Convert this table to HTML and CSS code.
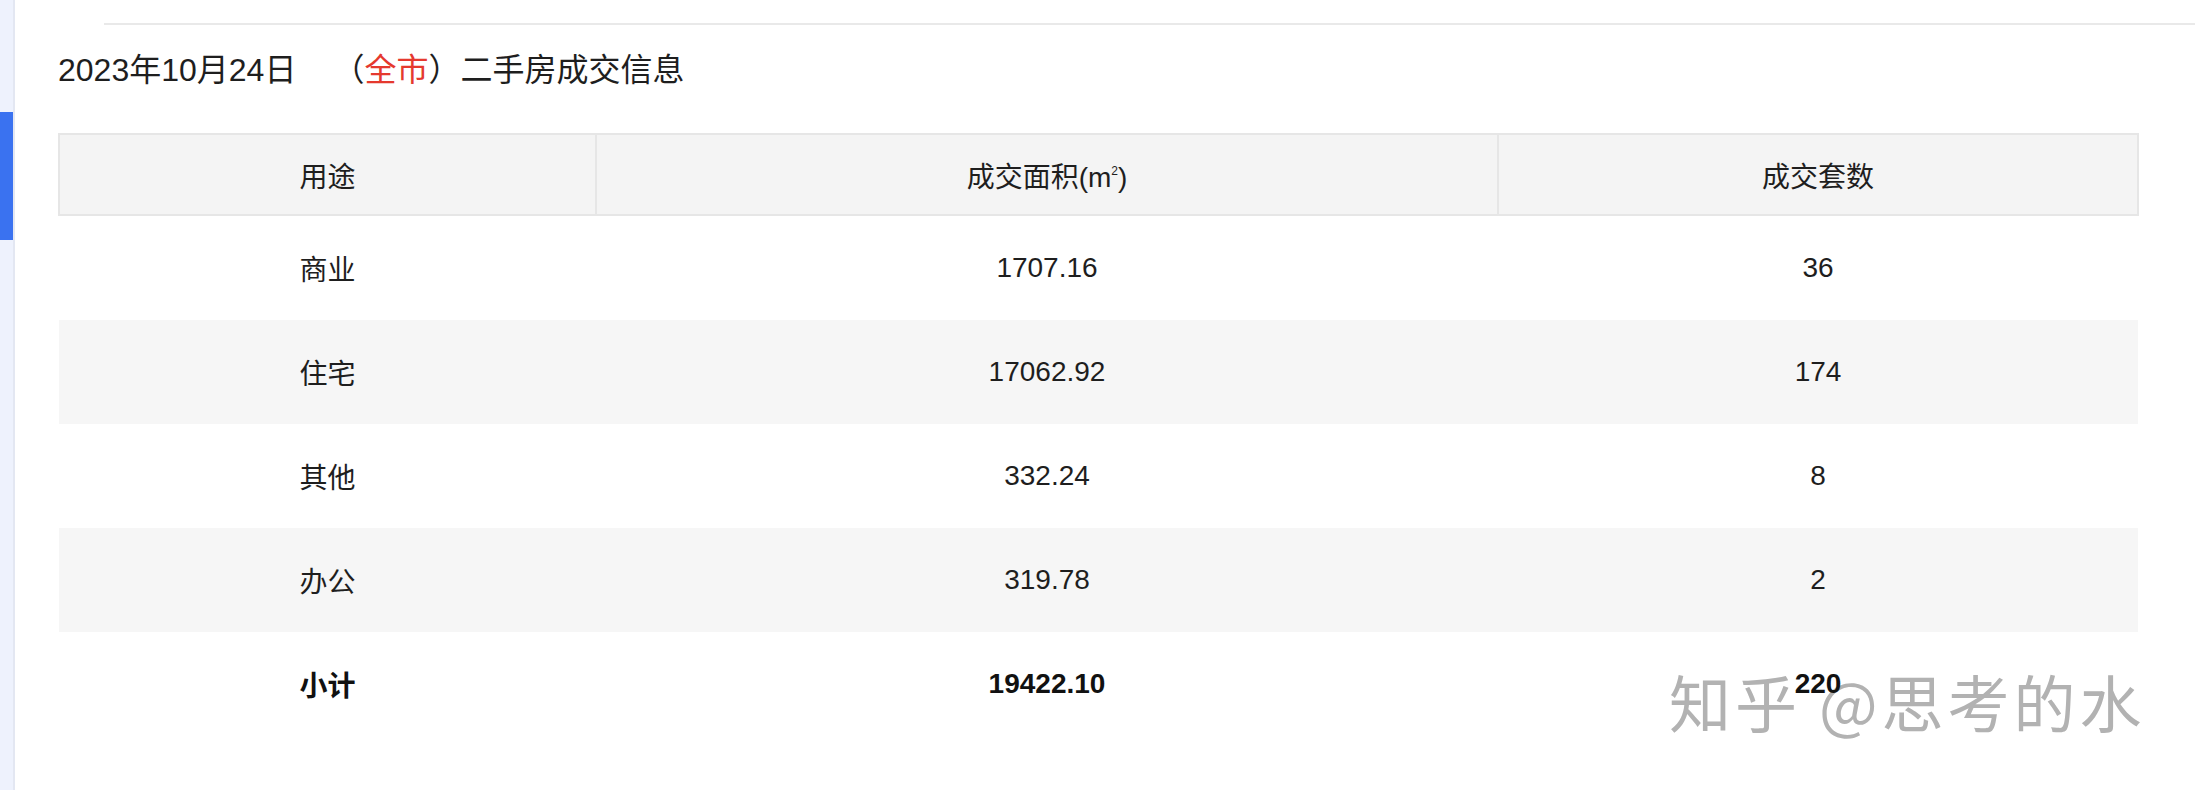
FILE: index.html
```html
<!DOCTYPE html>
<html lang="zh-CN">
<head>
<meta charset="utf-8">
<title>二手房成交信息</title>
<link rel="stylesheet" href="styles.css">
</head>
<body>
<div class="page">
  <aside class="rail"><div class="rail-mark"></div></aside>
  <main class="main">
    <div class="topbar"></div>
    <h2 class="title">2023年10月24日<span class="scope">（<em class="city">全市</em>）</span>二手房成交信息</h2>
    <table class="deal">
      <colgroup>
        <col class="c1"><col class="c2"><col class="c3">
      </colgroup>
      <thead>
        <tr><th>用途</th><th>成交面积(m<sup>2</sup>)</th><th>成交套数</th></tr>
      </thead>
      <tbody>
        <tr><td>商业</td><td>1707.16</td><td>36</td></tr>
        <tr class="alt"><td>住宅</td><td>17062.92</td><td>174</td></tr>
        <tr><td>其他</td><td>332.24</td><td>8</td></tr>
        <tr class="alt"><td>办公</td><td>319.78</td><td>2</td></tr>
        <tr class="total"><td>小计</td><td>19422.10</td><td><span class="over">220</span></td></tr>
      </tbody>
    </table>
  </main>
  <div class="watermark">知乎 @思考的水</div>
</div>
</body>
</html>
```

FILE: styles.css
```css
html, body {
  margin: 0;
  padding: 0;
  background: #ffffff;
}
body {
  font-family: "Liberation Sans", "Noto Sans CJK SC", sans-serif;
  color: #1e1e1e;
}
.page {
  position: relative;
  display: flex;
  min-height: 790px;
}
.rail {
  flex: none;
  width: 13px;
  background: #eef2fd;
  border-right: 2px solid #e3e7f2;
}
.rail-mark {
  margin-top: 112px;
  height: 128px;
  background: #3a72f0;
}
.main {
  flex: 1;
  min-width: 0;
}
.topbar {
  height: 23px;
  margin-left: 89px;
  border-bottom: 2px solid #e9e9e9;
}
.title {
  margin: 23px 0 0 43px;
  font-size: 32px;
  line-height: 44px;
  font-weight: normal;
  white-space: nowrap;
}
.scope {
  margin-left: 36px;
}
.city {
  font-style: normal;
  color: #e5392e;
}
.deal {
  margin: 41px 0 0 43px;
  width: 2079px;
  table-layout: fixed;
  border-collapse: collapse;
  font-size: 28px;
}
.c1 { width: 537px; }
.c2 { width: 902px; }
.c3 { width: 640px; }
.deal th {
  height: 79px;
  padding: 0;
  font-weight: normal;
  text-align: center;
  vertical-align: middle;
  background: #f4f4f4;
  border: 2px solid #e6e6e6;
}
.deal th sup {
  font-size: 12px;
  vertical-align: 12px;
  line-height: 0;
}
.deal td {
  height: 104px;
  padding: 0;
  text-align: center;
  vertical-align: middle;
}
.deal .alt td {
  background: #f6f6f6;
}
.deal .total td {
  font-weight: bold;
  color: #111;
}
.over {
  position: relative;
  z-index: 2;
}
.watermark {
  position: absolute;
  left: 1669px;
  top: 670px;
  z-index: 1;
  font-family: "Noto Sans CJK SC", sans-serif;
  font-size: 62px;
  line-height: 1;
  letter-spacing: 4px;
  color: #b2b2b2;
  white-space: nowrap;
  text-shadow: 2px 2px 0 #ffffff;
}
```
